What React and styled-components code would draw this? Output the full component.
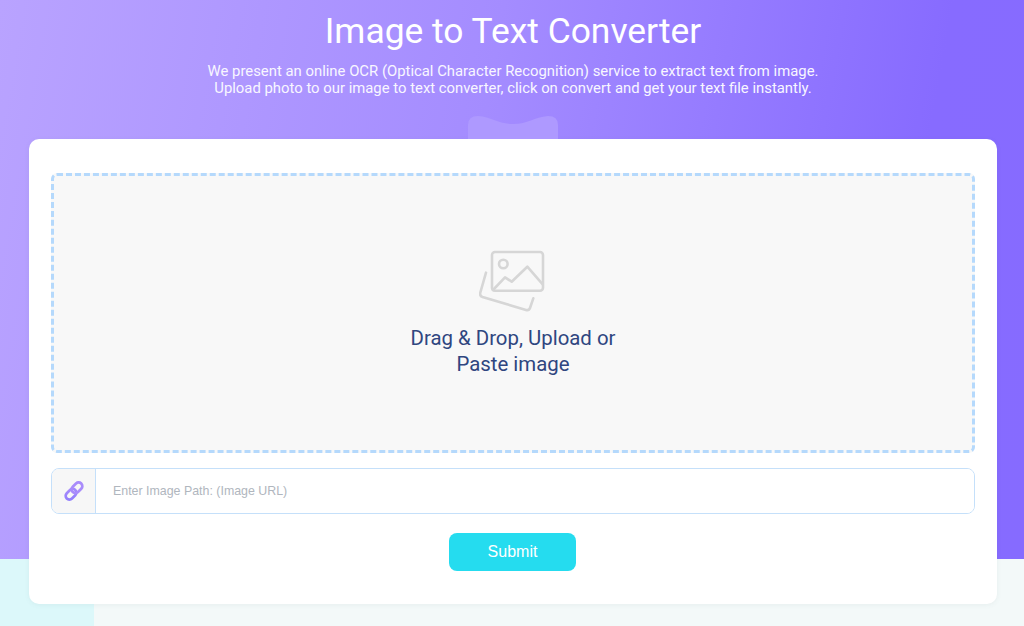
import React from 'react'
import styled, { createGlobalStyle } from 'styled-components'

const Global = createGlobalStyle`
  html, body { margin: 0; padding: 0; }
  body { font-family: Roboto, "Liberation Sans", sans-serif; overflow: hidden; }
  * { box-sizing: border-box; }
`

const Page = styled.div`
  width: 1024px;
  height: 626px;
  padding-left: 2px;
  overflow: hidden;
  display: flex;
  flex-direction: column;
  align-items: center;
  background:
    linear-gradient(100deg, #b9a3ff 0%, #a48cff 45%, #876bff 85%, #866bff 100%) top / 100% 559px no-repeat,
    linear-gradient(#dcf8fa, #dcf8fa) left bottom / 94px 67px no-repeat,
    #f3f9f9;
`

const Hero = styled.header`
  height: 139px;
  width: 100%;
  padding-top: 9px;
  position: relative;
  text-align: center;
  color: #fff;
`

const Title = styled.h1`
  margin: 0;
  font-size: 35.4px;
  line-height: 44px;
  font-weight: 400;
`

const Lead = styled.p`
  margin: 10px 0 0;
  font-size: 14.87px;
  line-height: 17px;
  font-weight: 400;
  color: #f8f6ff;
`

const Notch = styled.svg`
  position: absolute;
  left: 466px;
  top: 115px;
  width: 90px;
  height: 24px;
`

const Card = styled.main`
  width: 968px;
  height: 465px;
  padding: 34px 22px 0;
  background: #fff;
  border-radius: 10px;
  box-shadow: 0 1px 5px rgba(90, 110, 120, 0.08);
  display: flex;
  flex-direction: column;
  align-items: center;
`

const DropZone = styled.div`
  width: 100%;
  height: 280px;
  padding-top: 74px;
  display: flex;
  flex-direction: column;
  align-items: center;
  background: #f8f8f8;
  border: 3px dashed #b5d9fc;
  border-radius: 6px;
`

const DropText = styled.p`
  margin: 13px 0 0;
  width: 240px;
  text-align: center;
  font-size: 20.4px;
  line-height: 26px;
  color: #2f4680;
`

const UrlRow = styled.div`
  width: 100%;
  height: 46px;
  margin-top: 15px;
  display: flex;
  border: 1px solid #c5e0fa;
  border-radius: 8px;
  overflow: hidden;
`

const UrlIcon = styled.div`
  width: 44px;
  flex: none;
  display: flex;
  align-items: center;
  justify-content: center;
  background: #f7f7f7;
  border-right: 1px solid #c5e0fa;
`

const UrlInput = styled.input`
  flex: 1;
  border: 0;
  outline: 0;
  padding: 0 17px;
  font-family: "Liberation Sans", Arial, sans-serif;
  font-size: 12.4px;
  color: #333;
  &::placeholder { color: #b0b6be; opacity: 1; }
`

const Submit = styled.button`
  width: 127px;
  height: 38px;
  margin-top: 19px;
  margin-right: 1px;
  border: 0;
  border-radius: 8px;
  background: #25dcef;
  color: #fff;
  font-family: "Liberation Sans", Arial, sans-serif;
  font-size: 16px;
`

const PhotosIcon = () => (
  <svg width="68" height="62" viewBox="0 0 68 62" fill="none" stroke="#d6d6d6" strokeWidth="2.6" strokeLinecap="round" strokeLinejoin="round">
    <rect x="13" y="2" width="51" height="38.7" rx="3" />
    <circle cx="24.3" cy="14" r="4.3" />
    <path d="M14 40 L26 27.3 L32.7 31.7 L48.3 16.7 L63.7 34.3" />
    <path d="M7 22.7 L1.2 43 Q0.6 46 3.5 47 L47 60 Q50 60.8 51 58 L54.3 48.3" />
  </svg>
)

const LinkIcon = () => (
  <svg width="20" height="20" viewBox="0 0 20 20" fill="none" strokeWidth="2.7">
    <defs>
      <linearGradient id="chain" x1="0" y1="1" x2="1" y2="0">
        <stop offset="0" stopColor="#8f7dfd" />
        <stop offset="1" stopColor="#a98cfb" />
      </linearGradient>
    </defs>
    <rect x="1" y="9.5" width="12" height="7.4" rx="3.7" stroke="url(#chain)" transform="rotate(-45 7 13.2)" />
    <rect x="7" y="3.1" width="12" height="7.4" rx="3.7" stroke="#a98cfb" transform="rotate(-45 13 6.8)" />
  </svg>
)

export default function App() {
  return (
    <Page>
      <Global />
      <Hero>
        <Title>Image to Text Converter</Title>
        <Lead>
          We present an online OCR (Optical Character Recognition) service to extract text from image.
          <br />
          Upload photo to our image to text converter, click on convert and get your text file instantly.
        </Lead>
        <Notch viewBox="0 0 90 24">
          <path d="M0 24 V10 Q0 1 10 1 C24 2 30 9 45 9 C60 9 66 2 80 1 Q90 1 90 10 V24 Z" fill="#ae99ff" />
        </Notch>
      </Hero>
      <Card>
        <DropZone>
          <PhotosIcon />
          <DropText>Drag &amp; Drop, Upload or Paste image</DropText>
        </DropZone>
        <UrlRow>
          <UrlIcon><LinkIcon /></UrlIcon>
          <UrlInput placeholder="Enter Image Path: (Image URL)" />
        </UrlRow>
        <Submit>Submit</Submit>
      </Card>
    </Page>
  )
}
